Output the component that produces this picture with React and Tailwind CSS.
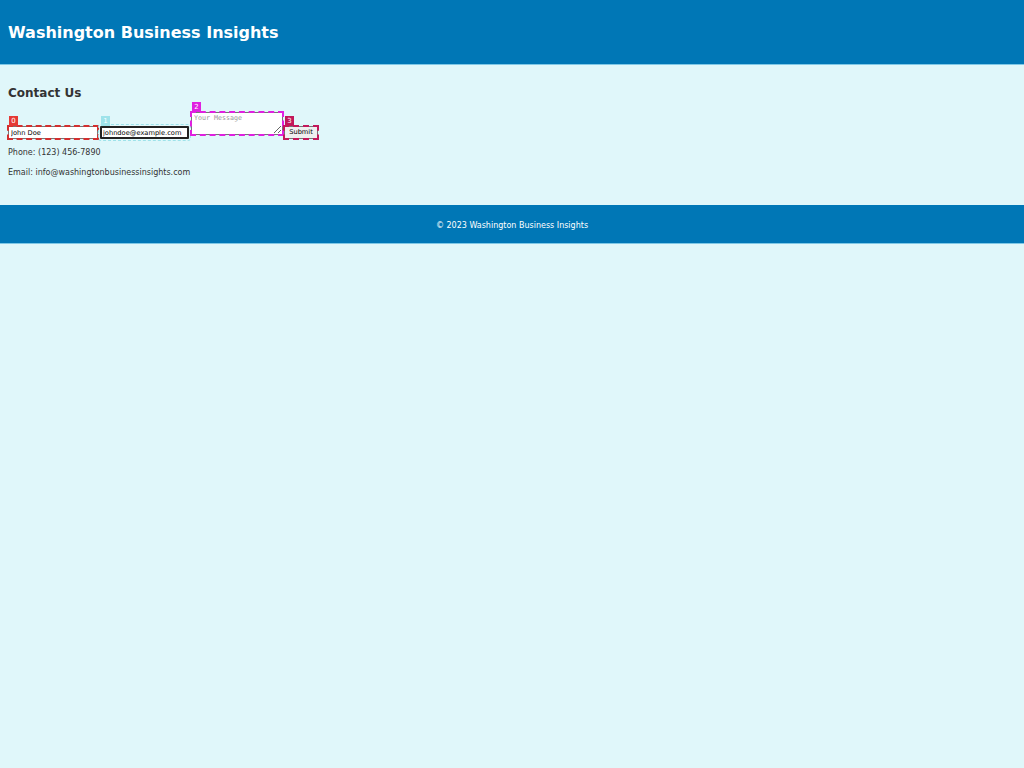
import React from 'react';

const Mark = ({ n, bg, text = 'text-white' }) => (
  <span className={`absolute -top-[10px] left-[1px] flex h-[10px] w-[9px] items-center justify-center text-[7px] leading-none ${bg} ${text}`}>
    {n}
  </span>
);

export default function App() {
  return (
    <div className="min-h-[768px] bg-[#e0f7fa] text-[#333] font-['DejaVu_Sans',sans-serif]">
      <header className="flex h-16 items-center bg-[#0077b6] px-2 pt-[2px] shadow-[0_1px_0_#7fc8e6]">
        <h1 className="text-[16px] font-bold text-white">Washington Business Insights</h1>
      </header>

      <main className="px-2 pt-[20px] pb-[22px]">
        <h2 className="text-[12px] font-bold leading-[18px] text-[#333]">Contact Us</h2>

        <form className="mt-[10px] flex items-end" onSubmit={(e) => e.preventDefault()}>
          <div className="relative">
            <input
              type="text"
              defaultValue="John Doe"
              className="block h-[13px] w-[90px] border border-[#767676] bg-white px-[2px] text-[6.67px] text-black outline-2 outline-dashed outline-[#d32f2f] -outline-offset-1"
            />
            <Mark n="0" bg="bg-[#e53935]" />
          </div>
          <div className="relative ml-[2px]">
            <input
              type="email"
              defaultValue="johndoe@example.com"
              className="block h-[13px] w-[89px] rounded-[1px] border-2 border-[#222] bg-white px-[1px] text-[6.67px] text-black outline-1 outline-dashed outline-[#9ee3ea] outline-offset-1"
            />
            <Mark n="1" bg="bg-[#9ee3ea]" />
          </div>
          <div className="relative ml-[2px] mb-[4px]">
            <textarea
              placeholder="Your Message"
              className="block h-[23px] w-[92px] resize border border-[#767676] bg-white px-[2px] pt-[1px] font-['DejaVu_Sans_Mono',monospace] text-[6.67px] leading-[8px] text-black placeholder:text-[#999] outline-2 outline-dashed outline-[#e020e0] -outline-offset-1"
            />
            <Mark n="2" bg="bg-[#e020e0]" />
          </div>
          <div className="relative ml-[1px]">
            <button
              type="submit"
              className="block h-[13px] w-[34px] border border-[#767676] bg-[#efefef] text-[6.67px] leading-none text-black outline-2 outline-dashed outline-[#c2185b] -outline-offset-1"
            >
              Submit
            </button>
            <Mark n="3" bg="bg-[#c2185b]" />
          </div>
        </form>

        <p className="mt-[4px] text-[8px] leading-[20px]">Phone: (123) 456-7890</p>
        <p className="text-[8px] leading-[20px]">Email: info@washingtonbusinessinsights.com</p>
      </main>

      <footer className="flex h-[38px] items-center justify-center bg-[#0077b6] pt-[4px] text-[8px] text-white shadow-[0_1px_0_#7fc8e6]">
        © 2023 Washington Business Insights
      </footer>
    </div>
  );
}
